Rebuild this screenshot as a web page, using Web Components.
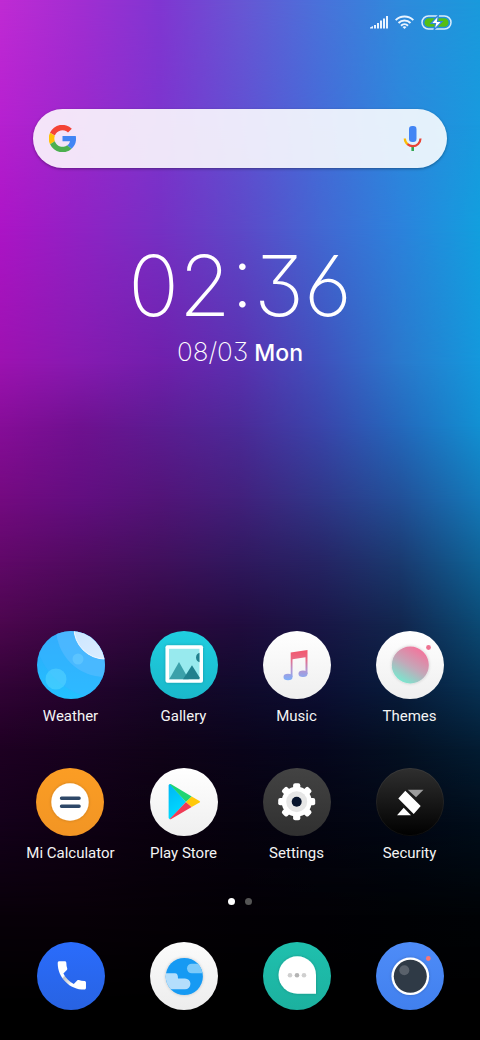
<!DOCTYPE html>
<html lang="en">
<head>
<meta charset="utf-8">
<meta name="viewport" content="width=device-width, initial-scale=1">
<title>Home</title>
<style>
    body {
        margin: 0;
        background: #000;
        color: #fff;
        font-family: Roboto, "Liberation Sans", sans-serif;
    }
</style>
</head>
<body>
<home-screen></home-screen>

<script>
// App icons, all drawn on a 68 x 68 box
const DISC = '<circle cx="34" cy="34" r="34" fill="url(#bg)"/>';

function bg(from, to) {
    return `<linearGradient id="bg" x1="0" y1="0" x2="0" y2="1"><stop offset="0" stop-color="${from}"/><stop offset="1" stop-color="${to}"/></linearGradient>`;
}

const SHADOW = '<filter id="sh" x="-30%" y="-30%" width="160%" height="160%"><feDropShadow dx="0" dy="0" stdDeviation="1.5" flood-opacity=".22"/></filter>';

const ICONS = {
    weather: `
        <defs>${bg('#2fa9fb', '#22c1ff')}<clipPath id="c"><circle cx="34" cy="34" r="34"/></clipPath>
        <linearGradient id="sun" x1="0" y1="0" x2="1" y2="1"><stop offset="0" stop-color="#c3e2ff"/><stop offset="1" stop-color="#e4f1ff"/></linearGradient></defs>
        ${DISC}
        <g clip-path="url(#c)">
            <circle cx="68" cy="-3" r="71" fill="#37b4ff" fill-opacity=".5"/>
            <circle cx="68" cy="-3" r="49" fill="#62bdff" fill-opacity=".5"/>
            <circle cx="68" cy="-3" r="31" fill="url(#sun)" stroke="#f2f9ff"/>
            <circle cx="41" cy="28" r="5.5" fill="#6fd0ff" fill-opacity=".5"/>
            <circle cx="19" cy="48" r="10.5" fill="#5fdcff" fill-opacity=".45"/>
        </g>`,
    gallery: `
        <defs>${bg('#20cee0', '#1ab9cb')}${SHADOW}</defs>
        ${DISC}
        <rect x="15.500" y="14.300" width="37.500" height="37.500" rx="2" fill="#fff" filter="url(#sh)"/>
        <rect x="19" y="17.800" width="30.500" height="30.500" fill="#98eaee"/>
        <path d="M49.500 21.800a5 5 0 0 0 0 9.500z" fill="#20808d"/>
        <path d="M19.200 48.300 29 31l9.700 17.300z" fill="#3ba1aa"/>
        <path d="M33 48.300l9-14 7.500 12v2z" fill="#20808d"/>`,
    music: `
        <defs>${bg('#fff', '#efefef')}
        <linearGradient id="n" gradientUnits="userSpaceOnUse" x1="0" y1="19" x2="0" y2="49"><stop offset="0" stop-color="#f2566c"/><stop offset=".3" stop-color="#ea6a84"/><stop offset=".65" stop-color="#b593cf"/><stop offset="1" stop-color="#7fb0fa"/></linearGradient></defs>
        ${DISC}
        <g fill="url(#n)">
            <path d="M27.700 21.500 44.500 19v24h-2V26.300L29.500 28.300V46h-1.800z"/>
            <ellipse cx="25" cy="46" rx="4.500" ry="3.300"/>
            <ellipse cx="40" cy="42.800" rx="4.500" ry="3.300"/>
        </g>`,
    themes: `
        <defs>${bg('#fff', '#efefef')}${SHADOW}
        <linearGradient id="t" x1=".75" y1=".1" x2=".25" y2=".95"><stop offset="0" stop-color="#f0789e"/><stop offset=".5" stop-color="#c4a7b8"/><stop offset="1" stop-color="#78e8cf"/></linearGradient></defs>
        ${DISC}
        <circle cx="34.300" cy="34" r="18.500" fill="url(#t)" filter="url(#sh)"/>
        <circle cx="52.500" cy="16.500" r="2.400" fill="#ee7291"/>`,
    calculator: `
        <defs>${bg('#fb9d24', '#f29524')}${SHADOW}</defs>
        ${DISC}
        <circle cx="34" cy="34" r="18.700" fill="#fff" filter="url(#sh)"/>
        <path d="M25.500 30.300h17.600M25.500 38.300h17.600" stroke="#2e4868" stroke-width="3.400" stroke-linecap="round"/>`,
    play: `
        <defs>${bg('#fff', '#efefef')}
        <linearGradient id="b" x1="0" y1="0" x2=".3" y2="1"><stop offset="0" stop-color="#00b5f5"/><stop offset="1" stop-color="#00dcff"/></linearGradient></defs>
        ${DISC}
        <path d="M18.600 17.500q0-1.500 1.500-1.500L36 34 20.100 51q-1.500 0-1.500-1.500z" fill="url(#b)"/>
        <path d="M19.500 16q.8-.3 1.700.3l20.500 12.100L36 34z" fill="#1fd573"/>
        <path d="M19.500 51.200q.8.300 1.700-.3l20.500-11.900L36 34z" fill="#ef3b55"/>
        <path d="M41.700 28.400 49.500 33q1.300.8 0 1.600L41.700 39 36 34z" fill="#ffc80a"/>`,
    settings: `
        <defs>${bg('#434343', '#303030')}<rect id="tooth" x="-3.600" y="-18.500" width="7.200" height="37" rx="2"/></defs>
        ${DISC}
        <g transform="translate(33.700 33.700)" fill="#fff">
            <circle r="15"/>
            <use href="#tooth"/>
            <use href="#tooth" transform="rotate(45)"/>
            <use href="#tooth" transform="rotate(90)"/>
            <use href="#tooth" transform="rotate(135)"/>
            <circle r="10.500" fill="#e6e6e6"/>
            <circle r="5" fill="#07142c"/>
        </g>`,
    security: `
        <defs>${bg('#2f2f2f', '#000')}</defs>
        ${DISC}
        <circle cx="34" cy="34" r="33.500" fill="none" stroke="#fff" stroke-opacity=".05"/>
        <path d="M31.700 21.700h15.800L40 29.300z" fill="#9b9b9b"/>
        <path d="M29.300 22.800 44.700 38l-7 8L22.300 30.400zM21 47.300h14l-7.300-7.600z" fill="#fff"/>`,
    phone: `
        <defs>${bg('#2a6cfc', '#2863e2')}
        <linearGradient id="h" gradientUnits="userSpaceOnUse" x1="3" y1="3" x2="21" y2="21"><stop offset=".36" stop-color="#fff"/><stop offset=".4" stop-color="#bfc3cb"/><stop offset=".6" stop-color="#ececec"/><stop offset=".64" stop-color="#fff"/></linearGradient></defs>
        ${DISC}
        <path transform="translate(16 14.600) scale(1.570)" fill="url(#h)" d="M6.620 10.790c1.440 2.830 3.760 5.140 6.590 6.590l2.200-2.200c.27-.27.67-.36 1.020-.24 1.120.37 2.330.57 3.570.57.55 0 1 .45 1 1V20c0 .55-.45 1-1 1-9.390 0-17-7.610-17-17 0-.55.45-1 1-1h3.500c.55 0 1 .45 1 1 0 1.250.2 2.450.57 3.570.11.35.03.74-.25 1.020z"/>`,
    browser: `
        <defs>${bg('#fbfbfb', '#ededed')}${SHADOW}<clipPath id="c"><circle cx="34.300" cy="34.500" r="18.600"/></clipPath></defs>
        ${DISC}
        <circle cx="34.300" cy="34.500" r="18.600" fill="#169af3" filter="url(#sh)"/>
        <g clip-path="url(#c)">
            <rect x="37" y="21.700" width="24" height="9.600" rx="4.800" fill="#7ccafa"/>
            <path d="M10 31.300h15q3 0 3 5.100h7a5.450 5.450 0 0 1 0 10.900H10z" fill="#b4defc"/>
        </g>`,
    messages: `
        <defs>${bg('#1fc0ae', '#1cb19f')}${SHADOW}</defs>
        ${DISC}
        <path d="M34.300 14.300a18.700 18.700 0 0 0 0 37.500H53V33A18.700 18.700 0 0 0 34.300 14.300z" fill="#fff" filter="url(#sh)"/>
        <circle cx="27" cy="33.300" r="2.300" fill="#cfcfcf"/>
        <circle cx="34" cy="33.300" r="2.300" fill="#b4b4b4"/>
        <circle cx="41" cy="33.300" r="2.300" fill="#cfcfcf"/>`,
    camera: `
        <defs>${bg('#4e8cf8', '#4180ee')}${SHADOW}</defs>
        ${DISC}
        <circle cx="34.300" cy="34.300" r="18.800" fill="#fff" filter="url(#sh)"/>
        <circle cx="34.300" cy="34.300" r="16.500" fill="#2f3a46"/>
        <circle cx="28.300" cy="28.300" r="5" fill="#59616b"/>
        <circle cx="52.300" cy="16.500" r="2.400" fill="#fa7676"/>`
};

class HomeWallpaper extends HTMLElement {
    constructor() {
        super();
        this.attachShadow({ mode: 'open' });
        // colour rows, each one [height in %, colours from left to right]
        const rows = [
            [0, '#c02bd4', '#a22ed2', '#8136d2', '#6856d4', '#4a72da', '#2f8adc', '#1a9adc'],
            [12, '#b620d0', '#9a28cc', '#7d34ce', '#624fd2', '#456bd8', '#2c87dc', '#189ade'],
            [22, '#ac14c6', '#9022c4', '#7630c4', '#5d48c8', '#4367d2', '#2c82dc', '#129fde'],
            [35, '#9c12b0', '#861ab0', '#701fac', '#5a30b0', '#4050bc', '#2a78cc', '#1498dc'],
            [41, '#860d98', '#6f1190', '#5c1c92', '#4c2a98', '#3a44aa', '#2468bc', '#1290d2'],
            [48, '#740a80', '#620e80', '#521478', '#42207c', '#303688', '#225098', '#1478b8'],
            [54, '#600868', '#500b60', '#40105c', '#30185e', '#262464', '#1a3a70', '#0f6296'],
            [60, '#4c064e', '#3c0746', '#2e083e', '#210c3e', '#191646', '#12264e', '#0b4a74'],
            [66, '#320336', '#24042e', '#180628', '#100a2c', '#0c0f34', '#081c3c', '#073254'],
            [72, '#1e0022', '#17021e', '#100318', '#0a041a', '#06071d', '#041022', '#031c32'],
            [79, '#14001a', '#0f0014', '#0a010f', '#06020e', '#030410', '#020714', '#010d1a'],
            [88, '#080009', '#080008', '#050006', '#030005', '#020105', '#000205', '#000306'],
            [97, '#000', '#000', '#000', '#000', '#000', '#000', '#000']
        ];
        const layers = rows.map(([y, ...colors], i) => {
            const mask = i ? `mask-image: linear-gradient(transparent ${rows[i - 1][0]}%, #000 ${y}%);` : '';
            return `<div style="background: linear-gradient(90deg, ${colors.join(', ')}); ${mask}"></div>`;
        }).join('');
        this.shadowRoot.innerHTML = `
            <style>
                :host {
                    display: grid;
                }

                div {
                    grid-area: 1 / 1;
                }
            </style>
            ${layers}
        `;
    }
}

class StatusBar extends HTMLElement {
    constructor() {
        super();
        this.attachShadow({ mode: 'open' });
        this.shadowRoot.innerHTML = `
            <style>
                :host {
                    display: flex;
                    justify-content: flex-end;
                    align-items: center;
                    gap: 7px;
                    height: 44px;
                    padding-right: 28px;
                }

                svg {
                    display: block;
                }
            </style>
            <svg width="18" height="14" viewBox="0 0 18 14" fill="#eaf4ff" role="img" aria-label="Signal">
                <path d="M0 13.500v-1l3-1.500v2.500zM4 10h2v3.500H4zM7 8h2v5.500H7zM10 5.500h2v8h-2zM13 3.500h2v10h-2zM16 1h2v12.500h-2z"/>
            </svg>
            <svg width="19" height="14" viewBox="0 0 19 14" fill="none" stroke="#eaf4ff" stroke-width="2" role="img" aria-label="Wi-Fi">
                <path d="M.7 5.100a12.500 12.500 0 0 1 17.600 0M3.500 8a8.500 8.500 0 0 1 12 0M6 10.700a5 5 0 0 1 7 0"/>
                <path d="M7.500 12q2-1.500 4 0l-2 2z" fill="#eaf4ff" stroke="none"/>
            </svg>
            <svg width="31" height="15" viewBox="0 0 31 15" role="img" aria-label="Battery charging">
                <rect x="1" y="1" width="29" height="13" rx="6.500" fill="none" stroke="#d8ecfc" stroke-width="1.500"/>
                <rect x="3.500" y="3.200" width="24" height="8.600" rx="4.300" fill="#55be14"/>
                <path d="M17.500 0 10 8.500h4.500L13 15l8-8.500h-4.500z" fill="#fff" stroke="#3288da" stroke-width="1.200"/>
            </svg>
        `;
    }
}

class SearchBar extends HTMLElement {
    constructor() {
        super();
        this.attachShadow({ mode: 'open' });
        this.shadowRoot.innerHTML = `
            <style>
                :host {
                    display: block;
                }

                form {
                    display: flex;
                    align-items: center;
                    height: 59px;
                    padding: 0 16px;
                    box-sizing: border-box;
                    border-radius: 30px;
                    background: rgba(255, 255, 255, 0.88);
                    box-shadow: 0 1px 3px rgba(0, 0, 0, 0.35);
                }

                input {
                    flex: 1;
                    min-width: 0;
                    border: 0;
                    outline: 0;
                    background: none;
                    font: 18px Roboto, sans-serif;
                }

                button {
                    display: block;
                    padding: 0;
                    border: 0;
                    background: none;
                }

                svg {
                    display: block;
                }
            </style>
            <form role="search">
                <button type="button" aria-label="Google">
                    <svg width="27" height="27" viewBox="2 2 44 44">
                        <path fill="#f44336" d="M3.600 14.700A22 22 0 0 1 39.200 8.200l-6.200 6A13.300 13.300 0 0 0 11.500 19.200z"/>
                        <path fill="#ffc107" d="M3.800 14.500a22 22 0 0 0 0 19l7.700-5a13.300 13.300 0 0 1 0-9z"/>
                        <path fill="#4caf50" d="M3.800 33.500A22 22 0 0 0 38.800 40.500l-7-5.500a13.300 13.300 0 0 1-20.300-6.500z"/>
                        <path fill="#4285f4" d="M24 20h21.600A22 22 0 0 1 38.800 40.500L31.800 35a10.500 10.500 0 0 0 4.600-6.500H24z"/>
                    </svg>
                </button>
                <input type="text" aria-label="Search">
                <button type="button" aria-label="Voice search">
                    <svg width="36" height="28" viewBox="0 0 36 28" fill="none">
                        <rect x="14" y="1" width="7.500" height="16" rx="3.200" fill="#4285f4"/>
                        <path d="M17.700 21v5" stroke="#34a853" stroke-width="2.600"/>
                        <path d="M9.800 13.500a8 8 0 0 0 3 6" stroke="#fbbc05" stroke-width="2.200"/>
                        <path d="M12.400 19.200q2.400 2 5.300 2a7.900 7.900 0 0 0 7.800-7.700" stroke="#ea4335" stroke-width="2.200"/>
                    </svg>
                </button>
            </form>
        `;
    }
}

class ClockWidget extends HTMLElement {
    constructor() {
        super();
        this.attachShadow({ mode: 'open' });
        this.shadowRoot.innerHTML = `
            <style>
                :host {
                    display: flex;
                    flex-direction: column;
                    align-items: center;
                    font-family: Inter, Roboto, sans-serif;
                    font-feature-settings: "cv03", "cv09";
                }

                .time {
                    font-size: 84px;
                    font-weight: 200;
                    line-height: 88px;
                }

                .date {
                    display: flex;
                    align-items: baseline;
                    gap: 6px;
                    margin-top: 6px;
                    font-size: 26px;
                    font-weight: 200;
                    line-height: 32px;
                }

                .day {
                    font-size: 23px;
                    font-weight: 500;
                }
            </style>
            <time class="time"><slot name="time"></slot></time>
            <div class="date">
                <slot name="date"></slot>
                <span class="day"><slot name="day"></slot></span>
            </div>
        `;
    }
}

class AppIcon extends HTMLElement {
    constructor() {
        super();
        this.attachShadow({ mode: 'open' });
    }

    connectedCallback() {
        const name = this.getAttribute('icon');
        this.shadowRoot.innerHTML = `
            <style>
                :host {
                    display: flex;
                    justify-content: center;
                }

                button {
                    display: flex;
                    flex-direction: column;
                    align-items: center;
                    gap: 7px;
                    padding: 0;
                    border: 0;
                    background: none;
                    color: #f4f4f4;
                    font: 15px/20px Roboto, "Liberation Sans", sans-serif;
                    white-space: nowrap;
                }

                svg {
                    display: block;
                }
            </style>
            <button type="button" aria-label="${name}">
                <svg width="68" height="68" viewBox="0 0 68 68" aria-hidden="true">${ICONS[name]}</svg>
                <slot></slot>
            </button>
        `;
    }
}

class AppGrid extends HTMLElement {
    constructor() {
        super();
        this.attachShadow({ mode: 'open' });
        this.shadowRoot.innerHTML = `
            <style>
                :host {
                    display: grid;
                    grid-template-columns: repeat(4, 1fr);
                    row-gap: 42px;
                    padding: 0 14px;
                }
            </style>
            <slot></slot>
        `;
    }
}

class PageDots extends HTMLElement {
    constructor() {
        super();
        this.attachShadow({ mode: 'open' });
        this.shadowRoot.innerHTML = `
            <style>
                :host {
                    display: flex;
                    justify-content: center;
                    gap: 10px;
                }

                span {
                    width: 7px;
                    height: 7px;
                    border-radius: 50%;
                    background: #555;
                }

                .current {
                    background: #fff;
                }
            </style>
            <span class="current"></span>
            <span></span>
        `;
    }
}

class HomeScreen extends HTMLElement {
    constructor() {
        super();
        this.attachShadow({ mode: 'open' });
        this.shadowRoot.innerHTML = `
            <style>
                :host {
                    display: grid;
                    min-height: 100vh;
                }

                home-wallpaper,
                main {
                    grid-area: 1 / 1;
                }

                main {
                    display: flex;
                    flex-direction: column;
                    z-index: 1;
                }

                search-bar {
                    margin: 65px 33px 0;
                }

                clock-widget {
                    margin-top: 74px;
                }

                .apps {
                    margin-top: auto;
                }

                page-dots {
                    margin: 35px 0 37px;
                }

                .dock {
                    margin-bottom: 30px;
                }
            </style>
            <home-wallpaper></home-wallpaper>
            <main>
                <status-bar></status-bar>
                <search-bar></search-bar>
                <clock-widget>
                    <span slot="time">02:36</span>
                    <span slot="date">08/03</span>
                    <span slot="day">Mon</span>
                </clock-widget>
                <app-grid class="apps">
                    <app-icon icon="weather">Weather</app-icon>
                    <app-icon icon="gallery">Gallery</app-icon>
                    <app-icon icon="music">Music</app-icon>
                    <app-icon icon="themes">Themes</app-icon>
                    <app-icon icon="calculator">Mi Calculator</app-icon>
                    <app-icon icon="play">Play Store</app-icon>
                    <app-icon icon="settings">Settings</app-icon>
                    <app-icon icon="security">Security</app-icon>
                </app-grid>
                <page-dots></page-dots>
                <app-grid class="dock">
                    <app-icon icon="phone"></app-icon>
                    <app-icon icon="browser"></app-icon>
                    <app-icon icon="messages"></app-icon>
                    <app-icon icon="camera"></app-icon>
                </app-grid>
            </main>
        `;
    }
}

customElements.define('home-wallpaper', HomeWallpaper);
customElements.define('status-bar', StatusBar);
customElements.define('search-bar', SearchBar);
customElements.define('clock-widget', ClockWidget);
customElements.define('app-icon', AppIcon);
customElements.define('app-grid', AppGrid);
customElements.define('page-dots', PageDots);
customElements.define('home-screen', HomeScreen);
</script>
</body>
</html>
